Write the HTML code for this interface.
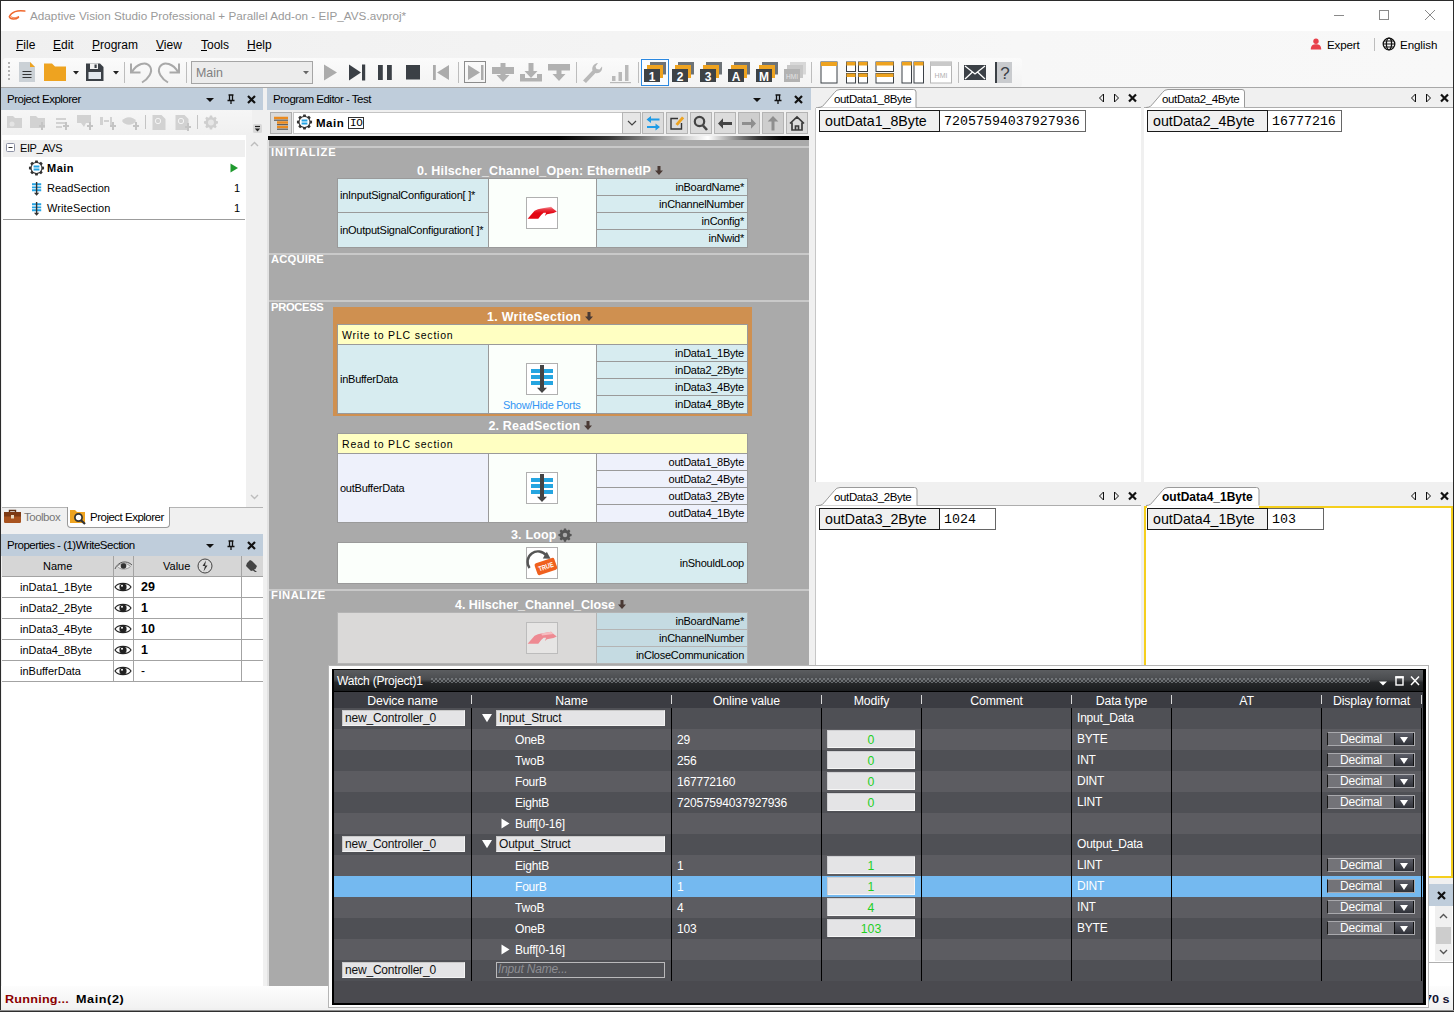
<!DOCTYPE html>
<html><head><meta charset="utf-8">
<style>
*{box-sizing:border-box;margin:0;padding:0}
html,body{width:1454px;height:1012px;overflow:hidden;background:#fff}
body{font-family:"Liberation Sans",sans-serif;font-size:12px;color:#000;position:relative}
.a{position:absolute}
.t{position:absolute;white-space:nowrap;line-height:14px}
.hdr{position:absolute;background:#bfcddb;height:22px}
.hdr .t{top:4px;font-size:11.5px;letter-spacing:-0.5px}
svg{position:absolute;overflow:visible}
.mono{font-family:"Liberation Mono",monospace}
.b{font-weight:bold}
.tah{font-size:11px;letter-spacing:0}
.tah.b{letter-spacing:0.5px}
.sec{font-weight:bold;font-size:10px;color:#fff;transform:scaleX(1.12);transform-origin:0 0}
.bt{font-weight:bold;font-size:12.5px;color:#fff}
.blk{background:#9a9a9a}
.pl,.pr{background:#d7ecf0}
.pc{background:#fbfffb}
.pt{font-size:11px;letter-spacing:-0.25px}
.r{text-align:right}
.vt{font-size:10.5px;letter-spacing:0.8px}
.ib{width:32px;height:32px;background:#fff;border:1px solid #b0b0b0}
.tb{font-size:11.5px;letter-spacing:-0.37px}
.tb.b{font-size:12px;letter-spacing:0}
.lb{height:22px;background:#f0f0f0;border:1px solid #1a1a1a}
.vb{height:22px;background:#fff;border:1px solid #666;border-left:0}
.lt{font-size:14.200px;line-height:17px}
.mv{font-size:13.300px;line-height:17px}
.wt{color:#fff;font-size:12px;letter-spacing:-0.2px}
.wh{top:694px;text-align:center;font-size:12.3px;letter-spacing:-0.1px}
.cs{top:708px;width:1px;height:273px;background:#000}
.ct{top:695px;width:1px;height:9px;background:#d8d8d8}
.wb{height:16px;background:#e4e4e6;border:1px solid #f4f4f4;border-top-color:#c8c8c8;border-left-color:#c8c8c8}
.wbt{font-size:12px;color:#111;letter-spacing:-0.2px}
.mb{left:827px;width:88px;height:18px;background:#e4e4e6;box-shadow:inset 1px 1px 0 #cfcfd2,inset -1px -1px 0 #f6f6f6}
.mt{left:827px;width:88px;text-align:center;color:#1fcf1f;font-size:12.3px}
.dc{left:1327px;width:88px;height:14px;background:#737378;border:1px solid #a9a9ad;border-left-color:#141414}
.dc b{position:absolute;left:0;top:-1px;width:66px;text-align:center;color:#fff;font-weight:normal;font-size:12px;letter-spacing:-0.2px;line-height:14px}
.dc i{position:absolute;left:66px;top:0;width:20px;height:12px;background:linear-gradient(#5c5e68,#2f3138);border-left:1px solid #111;border-right:1px solid #111}
.dc i:after{content:"";position:absolute;left:5px;top:3.500px;border:4.200px solid transparent;border-top:6px solid #fff;border-bottom:0}
.st{font-weight:bold;font-size:10.500px;letter-spacing:0.2px;transform:scaleX(1.2);transform-origin:0 0}
</style></head><body>
<!-- window frame -->
<div class="a" style="left:0;top:0;width:1454px;height:1012px;border:1px solid #2b2b2b;border-bottom-color:#444"></div>
<!-- title bar -->
<div class="a" id="titlebar" style="left:1px;top:1px;width:1452px;height:30px;background:#fff"></div>
<!-- menu bar -->
<div class="a" id="menubar" style="left:1px;top:31px;width:1452px;height:27px;background:linear-gradient(90deg,#f0f0f0 0,#f1f1f1 15%,#f7f7f7 70%,#f8f8f8 100%)"></div>
<!-- toolbar row -->
<div class="a" id="toolrow" style="left:1px;top:58px;width:1452px;height:30px;background:linear-gradient(90deg,#f0f0f0 0,#f1f1f1 15%,#f7f7f7 70%,#f8f8f8 100%)"></div>
<!-- main area bg -->
<div class="a" id="mainbg" style="left:1px;top:88px;width:1452px;height:898px;background:#f0f0f0"></div>
<!-- status bar -->
<div class="a" id="status" style="left:1px;top:986px;width:1452px;height:25px;background:#f0f0f0"></div>
<!-- TITLE -->
<svg style="left:8px;top:9px" width="18" height="12" viewBox="0 0 18 12"><path d="M16.8 2.100C9.500 0.800 3.200 2.800 1.300 7.800C2.500 10.800 7.500 10.800 10.500 8.300" fill="none" stroke="#f0672c" stroke-width="1.500" stroke-linecap="round"/><path d="M3 7.500C4.500 9.300 8 9 10.500 7.600" fill="none" stroke="#f0672c" stroke-width="1" stroke-linecap="round"/></svg>
<div class="t" id="ttl" style="left:30px;top:9px;font-size:11.7px;color:#9a9a9a;letter-spacing:0.02px">Adaptive Vision Studio Professional + Parallel Add-on - EIP_AVS.avproj*</div>
<svg style="left:1334px;top:9px" width="110" height="14" viewBox="0 0 110 14" fill="none" stroke="#8a8a8a" stroke-width="1"><path d="M0 6.500H10"/><rect x="45.500" y="1.500" width="9" height="9"/><path d="M91 1l10 10M101 1L91 11"/></svg>
<!-- MENU -->
<div class="t" style="left:16px;top:38px;font-size:12px"><u>F</u>ile</div>
<div class="t" style="left:53px;top:38px;font-size:12px"><u>E</u>dit</div>
<div class="t" style="left:92px;top:38px;font-size:12px"><u>P</u>rogram</div>
<div class="t" style="left:156px;top:38px;font-size:12px"><u>V</u>iew</div>
<div class="t" style="left:201px;top:38px;font-size:12px"><u>T</u>ools</div>
<div class="t" style="left:247px;top:38px;font-size:12px"><u>H</u>elp</div>
<svg style="left:1310px;top:38px" width="12" height="12" viewBox="0 0 12 12"><circle cx="6" cy="3.2" r="2.7" fill="#e8414b"/><path d="M0.8 11.500C0.8 7.5 3 6.300 6 6.300S11.200 7.500 11.200 11.500Z" fill="#e8414b"/></svg>
<div class="t" style="left:1327px;top:38px;font-size:11.6px;letter-spacing:-0.15px">Expert</div>
<div class="a" style="left:1374px;top:38px;width:1px;height:13px;background:#bdbdbd"></div>
<svg style="left:1382px;top:37px" width="14" height="14" viewBox="0 0 14 14" fill="none" stroke="#111" stroke-width="1.3"><circle cx="7" cy="7" r="5.800"/><ellipse cx="7" cy="7" rx="2.600" ry="5.800"/><path d="M1.2 7H12.800M2 4H12M2 10H12" stroke-width="1"/></svg>
<div class="t" style="left:1400px;top:38px;font-size:11.6px;letter-spacing:-0.1px">English</div>
<!-- TOOLBAR -->
<div class="a" style="left:1px;top:87px;width:1452px;height:1px;background:#a8a8a8"></div>
<div class="a" style="left:3px;top:58px;width:1019px;height:29px;background:linear-gradient(#fbfbfb,#f3f3f3);border-radius:3px"></div>
<div class="a" style="left:8px;top:62px;width:2px;height:19px;background:repeating-linear-gradient(#b4b4b4 0 2px,transparent 2px 4px)"></div>
<svg style="left:0;top:58px" width="1030" height="30" viewBox="0 58 1030 30">
 <!-- new -->
 <path d="M19 62h11l5 5v15H19z" fill="#cbd1d6"/><path d="M30 62l5 5h-5z" fill="#eea320"/><path d="M22.500 71.500h9M22.500 74.500h9M22.500 77.500h9" stroke="#333" stroke-width="1.2"/>
 <!-- folder -->
 <path d="M44 63.500h8l3 3h11V81H44z" fill="#eea320"/>
 <path d="M73 71h6l-3 3.500z" fill="#222"/>
 <!-- save -->
 <path d="M86 63.500h14l3.500 3.500V81H86z" fill="#3b4046"/><rect x="90" y="63.500" width="8" height="5.500" fill="#f3f3f3"/><rect x="94.500" y="64.500" width="2.200" height="3.500" fill="#3b4046"/><rect x="88.500" y="72" width="12.500" height="7" fill="#e3e8ee"/>
 <path d="M113 71h6l-3 3.500z" fill="#222"/>
 <path d="M124.500 62v21M186.500 62v21M458.500 62v21M576.500 62v21M638.500 62v21M811.500 62v21M958.500 62v21" stroke="#bdbdbd" stroke-width="1"/>
 <!-- undo redo -->
 <g fill="none" stroke="#a9a9a9" stroke-width="2"><path d="M131 63.500V72.500H140.500"/><path d="M132 72C136.500 64 146 60.500 150 66.500C153.500 72 148 79 142 82.500"/><path d="M179 63.500V72.500H169.500"/><path d="M178 72C173.500 64 164 60.500 160 66.500C156.500 72 162 79 168 82.500"/></g>
 <!-- combo -->
 <rect x="191.500" y="61.500" width="121" height="22" fill="#ececec" stroke="#a5a5a5"/><path d="M303 71h6l-3 3.200z" fill="#666"/>
 <!-- play controls -->
 <path d="M324 64.500v16l13-8z" fill="#ababab"/>
 <path d="M349 64.500v16l12-8z" fill="#3b4046"/><rect x="362" y="64.500" width="3.200" height="16" fill="#3b4046"/>
 <rect x="378" y="65" width="4.800" height="15" fill="#3b4046"/><rect x="387" y="65" width="4.800" height="15" fill="#3b4046"/>
 <rect x="406" y="65" width="14" height="14.500" fill="#3b4046"/>
 <rect x="433" y="65" width="2.800" height="15" fill="#ababab"/><path d="M449 65v15l-12-7.500z" fill="#ababab"/>
 <rect x="464.500" y="61.500" width="21" height="21" fill="none" stroke="#8c8c8c"/><path d="M468 65v15l12-7.500z" fill="#ababab"/><rect x="481" y="65" width="2.500" height="15" fill="#ababab"/>
 <!-- step icons -->
 <g fill="#b1b1b1"><rect x="492" y="67" width="22" height="7"/><path d="M500.500 63h5v12h4l-6.500 7-6.500-7h4z"/></g>
 <g fill="#b1b1b1"><path d="M528.500 63h5v8h4l-6.500 7-6.500-7h4z"/><path d="M520 74l5 0 0 4h12v-4h5v7.500h-22z"/></g>
 <g fill="#b1b1b1"><rect x="548" y="64" width="22" height="6.500"/><path d="M556.500 68h5v6h4l-6.500 7-6.500-7h4z"/></g>
 <!-- wrench -->
 <path d="M583 80.500l9.500-10c-1-3 1-7 5.500-7.500l-2.500 3.500 1 2.500 3 .5 2.500-3c1 4-2.500 7.500-6.500 6.500l-9.500 10z" fill="#b9b9b9"/>
 <!-- chart -->
 <g fill="#b9b9b9"><rect x="612" y="76" width="3.500" height="5"/><rect x="618.500" y="72" width="3.500" height="9"/><rect x="625" y="65" width="3.500" height="16"/><rect x="610" y="82" width="21" height="1.200"/></g>
 <!-- view 1 selected -->
 <rect x="641.500" y="59.500" width="27" height="26" fill="#f9fcff" stroke="#2b88e0"/>
 <g id="stk"><path d="M650 62h16v12.500h-16z" fill="#6d7378"/><path d="M647 65h16v13h-16z" fill="#eea320"/><path d="M644 69h16v13h-16z" fill="#3d4246"/></g>
 <use href="#stk" x="28"/><use href="#stk" x="56"/><use href="#stk" x="84"/><use href="#stk" x="112"/>
 <g><path d="M790 62h16v12.500h-16z" fill="#d8d8d8"/><path d="M787 65h16v13h-16z" fill="#c8c8c8"/><path d="M784 69h16v13h-16z" fill="#b2b2b2"/></g>
 <g fill="#fff" font-family="Liberation Sans" font-weight="bold" font-size="12" text-anchor="middle"><text x="652" y="80.500">1</text><text x="680" y="80.500">2</text><text x="708" y="80.500">3</text><text x="736" y="80.500">A</text><text x="764" y="80.500">M</text><text x="792" y="79" font-size="6.500" font-weight="normal" fill="#e4e4e4">HMI</text></g>
 <!-- layout icons -->
 <g fill="#fff" stroke="#3b4046" stroke-width="1">
  <rect x="821" y="62" width="16" height="21"/>
  <rect x="846.500" y="62" width="9" height="9.500"/><rect x="858.500" y="62" width="9" height="9.500"/><rect x="846.500" y="73.500" width="9" height="9.500"/><rect x="858.500" y="73.500" width="9" height="9.500"/>
  <rect x="876" y="62" width="17.500" height="9.500"/><rect x="876" y="73.500" width="17.500" height="9.500"/>
  <rect x="902" y="62" width="9.500" height="21"/><rect x="914" y="62" width="9.500" height="21"/>
 </g>
 <g fill="#eea320"><rect x="821" y="62" width="16" height="4"/><rect x="846.500" y="62" width="9" height="3.500"/><rect x="858.500" y="62" width="9" height="3.500"/><rect x="846.500" y="73.500" width="9" height="3.500"/><rect x="858.500" y="73.500" width="9" height="3.500"/><rect x="876" y="62" width="17.500" height="3.500"/><rect x="876" y="73.500" width="17.500" height="3.500"/><rect x="902" y="62" width="9.500" height="3.500"/><rect x="914" y="62" width="9.500" height="3.500"/></g>
 <rect x="930.500" y="62" width="21" height="21" fill="#fff" stroke="#b4b4b4"/><rect x="930.500" y="62" width="21" height="4" fill="#c9c9c9"/><text x="941" y="78" font-family="Liberation Sans" font-size="7" fill="#b0b0b0" text-anchor="middle">HMI</text>
 <!-- mail -->
 <rect x="964" y="65" width="22" height="15" fill="#3b4046"/><path d="M965 66l10 8 10-8M965 79l7.500-7M985 79l-7.500-7" fill="none" stroke="#fff" stroke-width="1.300"/>
 <!-- help -->
 <rect x="995" y="62" width="17" height="21" fill="#c9cbce"/><rect x="995" y="62" width="2" height="21" fill="#3b4046"/><text x="1005" y="79" font-family="Liberation Sans" font-size="17" fill="#3b4046" text-anchor="middle">?</text>
</svg>
<div class="t" style="left:196px;top:66px;font-size:12.4px;color:#808080">Main</div>

<!-- shared defs -->
<svg width="0" height="0" style="left:0;top:0"><defs>
 <g id="hdricons"><path d="M0 10h8l-4 4z" fill="#111"/><path d="M22.500 7h5M23.500 7v5.500M26.500 7v5.500M21.500 12.500h7M25 12.500v3.500" stroke="#111" stroke-width="1.300" fill="none"/><path d="M42 8l7 7M49 8l-7 7" stroke="#111" stroke-width="2.200" fill="none"/></g>
 <g id="gear"><path d="M6.300 0.500h2.400l.4 1.800 1.300.55 1.600-1 1.700 1.700-1 1.600.55 1.300 1.800.4v2.400l-1.800.4-.55 1.300 1 1.600-1.700 1.700-1.600-1-1.300.55-.4 1.800H6.300l-.4-1.800-1.300-.55-1.600 1-1.700-1.700 1-1.600-.55-1.300-1.800-.4V6.850l1.800-.4.55-1.300-1-1.600 1.700-1.700 1.600 1 1.300-.55z" fill="#333"/><circle cx="7.500" cy="8" r="4.900" fill="#fff"/><path d="M4.600 6.500h5.800M4.600 9.600h5.800" stroke="#27a4e4" stroke-width="2"/></g>
 <g id="secico"><path d="M0 2.300h9.200M0 5.400h9.200M0 8.300h9.200" stroke="#27a4e4" stroke-width="1.900"/><path d="M4.600 0v11.500" stroke="#333" stroke-width="1.400"/><path d="M2 10.800h5.200l-2.600 2.900z" fill="#333"/></g>
 <g id="eye"><path d="M0 4.500C3 -0.300 13 -0.300 16 4.500C13 9.300 3 9.300 0 4.500Z" fill="#fff" stroke="#222" stroke-width="1.200"/><circle cx="8" cy="4.500" r="3.600" fill="#222"/><circle cx="7" cy="3.300" r="1" fill="#fff"/></g>
 <g id="navic"><path d="M4.500 0.500v8l-4-4z" fill="none" stroke="#111" stroke-width="1"/><path d="M15.500 0.500v8l4-4z" fill="none" stroke="#111" stroke-width="1"/><path d="M30 1l7 7M37 1l-7 7" stroke="#111" stroke-width="2.200" fill="none"/></g>
</defs></svg>
<!-- PROJECT EXPLORER -->
<div class="hdr" style="left:1px;top:88px;width:262px"><div class="t" id="pe_h" style="left:6px">Project Explorer</div></div>
<svg style="left:206px;top:88px" width="52" height="22"><use href="#hdricons"/></svg>
<div class="a" style="left:2px;top:110px;width:250px;height:25px;background:linear-gradient(#f6f6f6,#f0f0f0)"></div>
<svg style="left:0;top:110px" width="264" height="26" viewBox="0 110 264 26">
 <g fill="#d2d2d2" stroke="none">
  <path d="M7 116h6l2 2h7v10H7z"/><path d="M30 116h6l2 2h7v10H30z"/>
  <path d="M56 118h10v2H56zM56 122h10v2H56zM56 126h6v2H56z"/>
  <path d="M77 115h14v8H77zM81 123l3 4 2-4z"/>
  <path d="M100 117h3v8h-3zM104 120h5v2h-5zM110 117h2v8h-2z"/>
  <path d="M122 121c3-5 11-5 14 0-3 5-11 5-14 0z"/>
  <path d="M152.500 115h9l4 4v11h-13z"/><path d="M175.500 115h9l4 4v11h-13z"/>
 </g>
 <g fill="#c4c4c4"><path d="M17 124h2v-3h2v3h2v2h-2v3h-2v-3h-2z" transform="translate(22 1)"/><path d="M17 124h2v-3h2v3h2v2h-2v3h-2v-3h-2z" transform="translate(46 1)"/><path d="M17 124h2v-3h2v3h2v2h-2v3h-2v-3h-2z" transform="translate(70 1)"/><path d="M17 124h2v-3h2v3h2v2h-2v3h-2v-3h-2z" transform="translate(93 1)"/><path d="M17 124h2v-3h2v3h2v2h-2v3h-2v-3h-2z" transform="translate(116 1)"/><path d="M17 124h2v-3h2v3h2v2h-2v3h-2v-3h-2z" transform="translate(168 2)"/></g>
 <circle cx="12" cy="124" r="2.500" fill="#e4e4e4"/><circle cx="158" cy="121" r="2.700" fill="none" stroke="#f4f4f4"/><circle cx="181" cy="121" r="2.700" fill="none" stroke="#f4f4f4"/>
 <path d="M145.500 115v14M197.500 115v14" stroke="#c4c4c4"/>
 <g transform="translate(204 115) scale(0.93)"><path d="M6.300 0.500h2.400l.4 1.800 1.300.55 1.600-1 1.700 1.700-1 1.600.55 1.300 1.800.4v2.400l-1.800.4-.55 1.300 1 1.600-1.700 1.700-1.600-1-1.300.55-.4 1.800H6.300l-.4-1.800-1.300-.55-1.600 1-1.700-1.700 1-1.600-.55-1.300-1.800-.4V6.850l1.800-.4.55-1.300-1-1.600 1.700-1.700 1.600 1 1.300-.55z" fill="#cfcfcf"/><circle cx="7.500" cy="8" r="3.200" fill="#e6e6e6"/></g>
 <rect x="253" y="124" width="9" height="9" rx="1.500" fill="#d9d9d9"/><path d="M255 126.500h5" stroke="#222" stroke-width="1.200"/><path d="M254.800 128.500h5.400l-2.700 3z" fill="#222"/>
</svg>
<div class="a" style="left:2px;top:135px;width:244px;height:372px;background:#fff"></div>
<div class="a" style="left:246px;top:135px;width:17px;height:370px;background:#f0f0f0"></div>
<svg style="left:250px;top:141px" width="9" height="6" viewBox="0 0 9 6"><path d="M1 5l3.500-3.500L8 5" fill="none" stroke="#bdbdbd" stroke-width="1.400"/></svg>
<svg style="left:250px;top:494px" width="9" height="6" viewBox="0 0 9 6"><path d="M1 1l3.500 3.500L8 1" fill="none" stroke="#bdbdbd" stroke-width="1.400"/></svg>
<div class="a" style="left:3px;top:140px;width:242px;height:17px;background:#efefef"></div>
<svg style="left:6px;top:143px" width="10" height="10"><rect x=".5" y=".5" width="8" height="8" fill="#fff" stroke="#8a8fa3" rx="1"/><path d="M2.500 4.500h4" stroke="#333"/></svg>
<div class="t tah" style="left:20px;top:141px;letter-spacing:-0.4px">EIP_AVS</div>
<svg style="left:29px;top:160px" width="16" height="17"><use href="#gear"/></svg>
<div class="t tah b" id="pe_main" style="left:47px;top:161px">Main</div>
<svg style="left:230px;top:163px" width="9" height="10"><path d="M.5 .5v9l7.500-4.500z" fill="#1f9a2e"/></svg>
<svg style="left:32px;top:182px" width="10" height="14"><use href="#secico"/></svg>
<div class="t tah" style="left:47px;top:181px">ReadSection</div>
<div class="t tah" style="left:234px;top:181px">1</div>
<svg style="left:32px;top:202px" width="10" height="14"><use href="#secico"/></svg>
<div class="t tah" style="left:47px;top:201px;letter-spacing:0.1px">WriteSection</div>
<div class="t tah" style="left:234px;top:201px">1</div>
<div class="a" style="left:3px;top:219px;width:242px;height:1px;background:#9c9c9c"></div>
<!-- tabs -->
<div class="a" style="left:2px;top:507px;width:261px;height:1px;background:#b4b4b4"></div>
<div class="a" style="left:67px;top:507px;width:103px;height:21px;background:#fff;border:1px solid #9a9a9a;border-top:0;border-radius:0 0 4px 4px"></div>
<svg style="left:4px;top:509px" width="17" height="15" viewBox="0 0 17 15"><path d="M5.500 3V1.500h6V3" fill="none" stroke="#5a2d12" stroke-width="1.400"/><rect x="0" y="3" width="17" height="11" rx="1.200" fill="#a8531f"/><rect x="0" y="3" width="17" height="4.500" fill="#7d3a14"/><rect x="7" y="6" width="3" height="3.500" fill="#e8d9c0"/></svg>
<div class="t" id="tb_t" style="left:24px;top:510px;color:#777;font-size:11.5px;letter-spacing:-0.5px">Toolbox</div>
<svg style="left:70px;top:509px" width="17" height="16" viewBox="0 0 17 16"><path d="M0 1h5l2 2h8v11H0z" fill="#eea320"/><circle cx="8.500" cy="8.500" r="3.600" fill="#fff" stroke="#333" stroke-width="1.700"/><path d="M11 11.200l4 3.800" stroke="#333" stroke-width="2.200"/></svg>
<div class="t" id="pe_t" style="left:90px;top:510px;font-size:11.5px;letter-spacing:-0.5px">Project Explorer</div>
<!-- PROPERTIES -->
<div class="hdr" style="left:1px;top:534px;width:262px"><div class="t" id="pr_h" style="left:6px">Properties - (1)WriteSection</div></div>
<svg style="left:206px;top:534px" width="52" height="22"><use href="#hdricons"/></svg>
<div class="a" style="left:2px;top:556px;width:261px;height:126px;background:#fff"></div>
<div class="a" style="left:2px;top:556px;width:261px;height:20px;background:#d6d6d6"></div>
<div class="a" style="left:2px;top:576px;width:261px;height:106px;background:repeating-linear-gradient(#a3a3a3 0 1px,transparent 1px 21px)"></div>
<div class="a" style="left:113px;top:556px;width:1px;height:125px;background:#a3a3a3"></div>
<div class="a" style="left:133px;top:556px;width:1px;height:125px;background:#a3a3a3"></div>
<div class="a" style="left:241px;top:556px;width:1px;height:125px;background:#a3a3a3"></div>
<div class="t tah" style="left:43px;top:559px">Name</div>
<div class="t tah" style="left:163px;top:559px">Value</div>
<svg style="left:114px;top:558px" width="19" height="16" viewBox="0 0 19 16"><path d="M1 11C4 3 13 2 18 7" fill="none" stroke="#555" stroke-width="1"/><path d="M3.500 8.500C6 4.500 13 4.500 16.500 8.500C13 12 6 12 3.500 8.500Z" fill="#e8e8e8" stroke="#888" stroke-width=".8"/><circle cx="9.500" cy="8" r="2.800" fill="#333"/></svg>
<svg style="left:197px;top:558px" width="16" height="16" viewBox="0 0 16 16"><circle cx="8" cy="8" r="7" fill="#dcdcdc" stroke="#444" stroke-width="1"/><path d="M9 2.500L5.500 8h2.500l-1.500 5.500L10.500 7.500H8z" fill="#333"/></svg>
<svg style="left:246px;top:559px" width="13" height="13" viewBox="0 0 13 13"><path d="M1 4l3-3 2 1 5 5-1.500 3-1.500.5 3 2.500h-2l-2-1.500-2 .5-5-5z" fill="#444"/></svg>
<div class="t tah" style="left:20px;top:580px">inData1_1Byte</div>
<div class="t tah" style="left:20px;top:601px">inData2_2Byte</div>
<div class="t tah" style="left:20px;top:622px">inData3_4Byte</div>
<div class="t tah" style="left:20px;top:643px">inData4_8Byte</div>
<div class="t tah" style="left:20px;top:664px">inBufferData</div>
<svg style="left:115px;top:582px" width="17" height="10"><use href="#eye" y=".5"/></svg>
<svg style="left:115px;top:603px" width="17" height="10"><use href="#eye" y=".5"/></svg>
<svg style="left:115px;top:624px" width="17" height="10"><use href="#eye" y=".5"/></svg>
<svg style="left:115px;top:645px" width="17" height="10"><use href="#eye" y=".5"/></svg>
<svg style="left:115px;top:666px" width="17" height="10"><use href="#eye" y=".5"/></svg>
<div class="t b" style="left:141px;top:580px;font-size:12.500px">29</div>
<div class="t b" style="left:141px;top:601px;font-size:12.500px">1</div>
<div class="t b" style="left:141px;top:622px;font-size:12.500px">10</div>
<div class="t b" style="left:141px;top:643px;font-size:12.500px">1</div>
<div class="t" style="left:141px;top:664px;font-size:12px">-</div>
<div class="a" style="left:2px;top:682px;width:261px;height:304px;background:#fff"></div>

<!-- PROGRAM EDITOR -->
<div class="hdr" style="left:267px;top:88px;width:544px"><div class="t" id="ed_h" style="left:6px">Program Editor - Test</div></div>
<svg style="left:753px;top:88px" width="52" height="22"><use href="#hdricons"/></svg>
<div class="a" style="left:267px;top:110px;width:542px;height:26px;background:#f0f0f0"></div>
<div class="a" style="left:270px;top:112px;width:22px;height:22px;background:#dadada;border:1px solid #adadad"></div>
<svg style="left:273px;top:116px" width="16" height="14" viewBox="0 0 16 14"><path d="M1 2h14M4 6.500h11M4 11h11" stroke="#eb8a1e" stroke-width="2.600"/><path d="M1 4.200h14M4 8.700h11M4 13.200h11" stroke="#333" stroke-width=".9"/></svg>
<div class="a" style="left:293px;top:112px;width:348px;height:22px;background:#fff;border:1px solid #c4c4c4"></div>
<svg style="left:297px;top:114px" width="16" height="17"><use href="#gear"/></svg>
<div class="t tah b" id="ed_main" style="left:316px;top:116px;font-size:11.5px">Main</div>
<div class="a" style="left:348px;top:117px;width:16px;height:12px;border:1px solid #333;background:#fff"></div>
<div class="t mono" style="left:350px;top:116px;font-size:11px;line-height:14px;letter-spacing:-0.3px">IO</div>
<div class="a" style="left:622px;top:112px;width:19px;height:22px;background:#e6e6e6;border:1px solid #b4b4b4"></div>
<svg style="left:627px;top:120px" width="10" height="7" viewBox="0 0 10 7"><path d="M1 1l4 4 4-4" fill="none" stroke="#444" stroke-width="1.200"/></svg>
<svg style="left:642px;top:112px" width="168" height="22" viewBox="642 112 168 22">
 <g fill="#dcdcdc" stroke="#b4b4b4"><rect x="642.500" y="112.500" width="21" height="21"/><rect x="666.500" y="112.500" width="21" height="21"/><rect x="690.500" y="112.500" width="21" height="21"/><rect x="714.500" y="112.500" width="21" height="21"/><rect x="738.500" y="112.500" width="21" height="21" fill="#cecece"/><rect x="762.500" y="112.500" width="21" height="21" fill="#cecece"/><rect x="786.500" y="112.500" width="21" height="21"/></g>
 <g fill="none" stroke="#1f9be6" stroke-width="2"><path d="M648 119.500h11.500"/><path d="M658.500 127h-11.500"/></g><path d="M651 116l-4.500 3.500 4.500 3.500zM655.500 123.500l4.500 3.500-4.500 3.500z" fill="#1f9be6"/>
 <path d="M678 118.500h-7v10.500h10.500v-6" fill="none" stroke="#333" stroke-width="1.400"/><path d="M675.500 124l6.500-7.500 2.200 1.800-6.500 7.500z" fill="#eea320"/>
 <circle cx="699.500" cy="121.500" r="4.700" fill="#d2d2d2" stroke="#444" stroke-width="2.200"/><path d="M703 125.500l4 4.500" stroke="#444" stroke-width="2.600"/>
 <path d="M732 122h-9v-3.800l-5 5.300 5 5.300v-3.800h9z" fill="#444"/>
 <path d="M742 122h9v-3.800l5 5.300-5 5.300v-3.800h-9z" fill="#8e8e8e"/>
 <path d="M771.500 130.500v-9h-3.800l5.300-5.500 5.300 5.500h-3.800v9z" fill="#8e8e8e"/>
 <path d="M790 123.500l7-6.500 7 6.500M792 122.500v7.500h10v-7.500M795.500 130v-4h3V130" fill="none" stroke="#3a3a3a" stroke-width="1.700"/>
</svg>
<!-- marquee bar -->
<div class="a" style="left:268px;top:136px;width:541px;height:4px;background:linear-gradient(90deg,#000 0,#000 290px,#333 340px,#fff 440px,#333 490px,#000 515px,#000 100%)"></div>
<!-- canvas -->
<div class="a" id="canvas" style="left:267px;top:140px;width:542px;height:846px;background:#aaa;border-left:2px solid #e2e2e2;overflow:hidden"></div>
<div class="a" style="left:269px;top:146px;width:540px;height:2px;background:#c9c9c9"></div>
<div class="a" style="left:269px;top:253px;width:540px;height:2px;background:#c9c9c9"></div>
<div class="a" style="left:269px;top:300px;width:540px;height:2px;background:#c9c9c9"></div>
<div class="a" style="left:269px;top:589px;width:540px;height:2px;background:#c9c9c9"></div>
<div class="t sec" style="left:271px;top:146px;letter-spacing:0.8px">INITIALIZE</div>
<div class="t sec" style="left:271px;top:253px;letter-spacing:0.17px">ACQUIRE</div>
<div class="t sec" style="left:271px;top:301px;letter-spacing:-0.3px">PROCESS</div>
<div class="t sec" style="left:271px;top:589px;letter-spacing:0.5px">FINALIZE</div>
<!-- block 0 -->
<div class="t bt" id="b0t" style="left:417px;top:164px;letter-spacing:0.15px">0. Hilscher_Channel_Open: EthernetIP</div>
<svg class="dar" style="left:655px;top:166px" width="8" height="9" viewBox="0 0 8 9"><path d="M2.500 0h3v4.500H8L4 9 0 4.500h2.500z" fill="#4a3a35"/></svg>
<div class="a blk" style="left:337px;top:178px;width:411px;height:70px"></div>
<div class="a pl" style="left:338px;top:179px;width:150px;height:33px"></div>
<div class="a pl" style="left:338px;top:213px;width:150px;height:34px"></div>
<div class="a pc" style="left:489px;top:179px;width:107px;height:68px"></div>
<div class="a pr" style="left:597px;top:179px;width:150px;height:16px"></div>
<div class="a pr" style="left:597px;top:196px;width:150px;height:16px"></div>
<div class="a pr" style="left:597px;top:213px;width:150px;height:16px"></div>
<div class="a pr" style="left:597px;top:230px;width:150px;height:17px"></div>
<div class="t pt" style="left:340px;top:188px">inInputSignalConfiguration[ ]*</div>
<div class="t pt" style="left:340px;top:223px">inOutputSignalConfiguration[ ]*</div>
<div class="t pt r" style="right:710px;top:180px">inBoardName*</div>
<div class="t pt r" style="right:710px;top:197px">inChannelNumber</div>
<div class="t pt r" style="right:710px;top:214px">inConfig*</div>
<div class="t pt r" style="right:710px;top:231px">inNwid*</div>
<div class="a ib" style="left:526px;top:197px"></div>
<svg style="left:526px;top:197px" width="32" height="32" viewBox="0 0 32 32"><defs><linearGradient id="hg" x1="0" y1="9.500" x2="0" y2="16" gradientUnits="userSpaceOnUse"><stop offset="0" stop-color="#f7a3a9"/><stop offset=".45" stop-color="#ea3a46"/><stop offset="1" stop-color="#e30613"/></linearGradient></defs><path d="M1.600 21.800L8.600 13.700Q12 11.900 15.200 11.600L25.100 9.800L27.500 11.900L30.800 14.400L27.500 16L20.900 17.300L18.900 19L20.100 15.700L17.600 15.700Q14.500 18 12.300 21.800Z" fill="url(#hg)"/></svg>
<!-- block 1 -->
<div class="a" style="left:333px;top:307px;width:419px;height:109px;background:#cf9050"></div>
<div class="t bt" id="b1t" style="left:487px;top:310px;letter-spacing:0.28px">1. WriteSection</div>
<svg style="left:585px;top:312px" width="8" height="9" viewBox="0 0 8 9"><path d="M2.500 0h3v4.500H8L4 9 0 4.500h2.500z" fill="#4a3a35"/></svg>
<div class="a blk" style="left:337px;top:324px;width:411px;height:90px"></div>
<div class="a" style="left:338px;top:325px;width:409px;height:19px;background:#ffffc2"></div>
<div class="t vt" style="left:342px;top:328px">Write to PLC section</div>
<div class="a pl" style="left:338px;top:345px;width:150px;height:68px"></div>
<div class="a pc" style="left:489px;top:345px;width:107px;height:68px"></div>
<div class="a pr" style="left:597px;top:345px;width:150px;height:16px"></div>
<div class="a pr" style="left:597px;top:362px;width:150px;height:16px"></div>
<div class="a pr" style="left:597px;top:379px;width:150px;height:16px"></div>
<div class="a pr" style="left:597px;top:396px;width:150px;height:17px"></div>
<div class="t pt" style="left:340px;top:372px">inBufferData</div>
<div class="t pt r" style="right:710px;top:346px">inData1_1Byte</div>
<div class="t pt r" style="right:710px;top:363px">inData2_2Byte</div>
<div class="t pt r" style="right:710px;top:380px">inData3_4Byte</div>
<div class="t pt r" style="right:710px;top:397px">inData4_8Byte</div>
<div class="a ib" style="left:526px;top:363px"></div>
<svg style="left:526px;top:363px" width="32" height="32" viewBox="0 0 32 32"><path d="M5 8h22M5 14h22M5 20h22" stroke="#25a5e0" stroke-width="4"/><path d="M16 2v24" stroke="#444" stroke-width="4"/><path d="M11 24.800h10l-5 5.200z" fill="#444"/></svg>
<div class="t" id="shp" style="left:503px;top:398px;font-size:11px;color:#3396f5;letter-spacing:-0.3px">Show/Hide Ports</div>
<!-- block 2 -->
<div class="t bt" id="b2t" style="left:488.5px;top:419px;letter-spacing:0.15px">2. ReadSection</div>
<svg style="left:584px;top:421px" width="8" height="9" viewBox="0 0 8 9"><path d="M2.500 0h3v4.500H8L4 9 0 4.500h2.500z" fill="#4a3a35"/></svg>
<div class="a blk" style="left:337px;top:433px;width:411px;height:90px"></div>
<div class="a" style="left:338px;top:434px;width:409px;height:19px;background:#ffffc2"></div>
<div class="t vt" style="left:342px;top:437px">Read to PLC section</div>
<div class="a pl" style="left:338px;top:454px;width:150px;height:68px;background:#eef1fb"></div>
<div class="a pc" style="left:489px;top:454px;width:107px;height:68px"></div>
<div class="a pr" style="left:597px;top:454px;width:150px;height:16px;background:#eef1fb"></div>
<div class="a pr" style="left:597px;top:471px;width:150px;height:16px;background:#eef1fb"></div>
<div class="a pr" style="left:597px;top:488px;width:150px;height:16px;background:#eef1fb"></div>
<div class="a pr" style="left:597px;top:505px;width:150px;height:17px;background:#eef1fb"></div>
<div class="t pt" style="left:340px;top:481px">outBufferData</div>
<div class="t pt r" style="right:710px;top:455px">outData1_8Byte</div>
<div class="t pt r" style="right:710px;top:472px">outData2_4Byte</div>
<div class="t pt r" style="right:710px;top:489px">outData3_2Byte</div>
<div class="t pt r" style="right:710px;top:506px">outData4_1Byte</div>
<div class="a ib" style="left:526px;top:472px"></div>
<svg style="left:526px;top:472px" width="32" height="32" viewBox="0 0 32 32"><path d="M5 8h22M5 14h22M5 20h22" stroke="#25a5e0" stroke-width="4"/><path d="M16 2v24" stroke="#444" stroke-width="4"/><path d="M11 24.800h10l-5 5.200z" fill="#444"/></svg>
<!-- block 3 -->
<div class="t bt" id="b3t" style="left:511px;top:528px;letter-spacing:0.17px">3. Loop</div>
<svg style="left:558px;top:528px" width="14" height="14" viewBox="0 0 15 16"><path d="M6.300 0.500h2.400l.4 1.800 1.300.55 1.600-1 1.700 1.700-1 1.600.55 1.300 1.800.4v2.400l-1.800.4-.55 1.300 1 1.600-1.700 1.700-1.600-1-1.300.55-.4 1.800H6.300l-.4-1.800-1.300-.55-1.600 1-1.700-1.700 1-1.600-.55-1.300-1.800-.4V6.850l1.800-.4.55-1.300-1-1.600 1.700-1.700 1.600 1 1.300-.55z" fill="#555"/><circle cx="7.500" cy="8" r="2.600" fill="#aaa"/></svg>
<div class="a blk" style="left:337px;top:542px;width:411px;height:42px"></div>
<div class="a pc" style="left:338px;top:543px;width:258px;height:40px"></div>
<div class="a pr" style="left:597px;top:543px;width:150px;height:40px"></div>
<div class="t pt r" style="right:710px;top:556px">inShouldLoop</div>
<div class="a ib" style="left:526px;top:547px"></div>
<svg style="left:526px;top:547px" width="32" height="32" viewBox="0 0 32 32"><path d="M3.600 21A10.400 10.400 0 0 1 20.300 8.600" fill="none" stroke="#555" stroke-width="2.400"/><path d="M20.800 4.800L24.600 11.800L16.800 11.600z" fill="#555"/><g transform="translate(19.900 19.500) rotate(-19)"><rect x="-10.400" y="-6.200" width="20.800" height="12.400" rx="2" fill="#f0601e"/><text x="0" y="2.700" font-family="Liberation Sans" font-weight="bold" font-size="7.200" fill="#fff" text-anchor="middle" textLength="15.500" lengthAdjust="spacingAndGlyphs">TRUE</text></g></svg>
<!-- block 4 -->
<div class="t bt" id="b4t" style="left:455px;top:598px;letter-spacing:-0.02px">4. Hilscher_Channel_Close</div>
<svg style="left:618px;top:600px" width="8" height="9" viewBox="0 0 8 9"><path d="M2.500 0h3v4.500H8L4 9 0 4.500h2.500z" fill="#4a3a35"/></svg>
<div class="a" style="left:337px;top:612px;width:411px;height:52px;background:#b4b4b4"></div>
<div class="a" style="left:338px;top:613px;width:258px;height:50px;background:#dad9d8"></div>
<div class="a" style="left:597px;top:613px;width:150px;height:16px;background:#c5dbe2"></div>
<div class="a" style="left:597px;top:630px;width:150px;height:16px;background:#c5dbe2"></div>
<div class="a" style="left:597px;top:647px;width:150px;height:16px;background:#c5dbe2"></div>
<div class="t pt r" style="right:710px;top:614px">inBoardName*</div>
<div class="t pt r" style="right:710px;top:631px">inChannelNumber</div>
<div class="t pt r" style="right:710px;top:648px">inCloseCommunication</div>
<div class="a" style="left:526px;top:622px;width:32px;height:32px;background:#e6e5e4;border:1px solid #bcbcbc"></div>
<svg style="left:526px;top:622px" width="32" height="32" viewBox="0 0 32 32"><path d="M1.600 21.800L8.600 13.700Q12 11.900 15.200 11.600L25.100 9.800L27.500 11.900L30.800 14.400L27.500 16L20.900 17.300L18.900 19L20.100 15.700L17.600 15.700Q14.500 18 12.300 21.800Z" fill="#ee8a92"/><path d="M15.200 11.600L25.100 9.800L27.500 11.900L16 13.500Z" fill="#f6bcc0"/></svg>

<!-- PREVIEWS -->
<div class="a" style="left:815px;top:108px;width:1px;height:374px;background:#c6c6c6"></div><div class="a" style="left:815px;top:506px;width:1px;height:480px;background:#c6c6c6"></div>
<div class="a" style="left:816px;top:108px;width:325px;height:374px;background:#fff"></div>
<div class="a" style="left:1144px;top:108px;width:309px;height:374px;background:#fff"></div>
<div class="a" style="left:816px;top:506px;width:325px;height:480px;background:#fff"></div>
<div class="a" style="left:1144px;top:506px;width:309px;height:372px;background:#fff;border:2px solid #f5cf1d;border-bottom-width:2px"></div>
<div class="a" style="left:816px;top:107px;width:325px;height:1px;background:#adadad"></div>
<div class="a" style="left:1144px;top:107px;width:309px;height:1px;background:#adadad"></div>
<div class="a" style="left:816px;top:505px;width:325px;height:1px;background:#adadad"></div>
<svg style="left:816px;top:88px" width="640" height="22" viewBox="816 88 640 22">
 <path d="M818 107.5C822 107.5 823.5 105.5 825.5 103.0L834.5 92.5Q836.5 89.5 840 89.5H913.5Q916 89.5 916 92.0V107.5" fill="#fff" stroke="#9a9a9a"/>
 <path d="M1146 107.5C1150 107.5 1151.5 105.5 1153.5 103.0L1162.5 92.5Q1164.5 89.5 1168 89.5H1242.0Q1244.5 89.5 1244.5 92.0V107.5" fill="#fff" stroke="#9a9a9a"/>
 <use href="#navic" x="1099" y="93.500"/><use href="#navic" x="1411" y="93.500"/>
</svg>
<svg style="left:816px;top:486px" width="640" height="22" viewBox="816 486 640 22">
 <path d="M818 505.5C822 505.5 823.5 503.5 825.5 501.0L834.5 490.5Q836.5 487.5 840 487.5H914.5Q917 487.5 917 490.0V505.5" fill="#fff" stroke="#9a9a9a"/>
 <path d="M1146 505.5C1150 505.5 1151.5 503.5 1153.5 501.0L1162.5 490.5Q1164.5 487.5 1168 487.5H1256.5Q1259 487.5 1259 490.0V505.5" fill="#fff" stroke="#9a9a9a"/>
 <use href="#navic" x="1099" y="491.500"/><use href="#navic" x="1411" y="491.500"/>
</svg>
<div class="a" style="left:1147px;top:506px;width:112px;height:2px;background:#fff"></div>
<div class="t tb" id="tab1" style="left:834px;top:92px">outData1_8Byte</div>
<div class="t tb" id="tab2" style="left:1162px;top:92px">outData2_4Byte</div>
<div class="t tb" id="tab3" style="left:834px;top:490px">outData3_2Byte</div>
<div class="t tb b" id="tab4" style="left:1162px;top:490px">outData4_1Byte</div>
<div class="a lb" style="left:819px;top:110px;width:121px"></div><div class="a vb" style="left:940px;top:110px;width:146px"></div>
<div class="a lb" style="left:1147px;top:110px;width:121px"></div><div class="a vb" style="left:1268px;top:110px;width:74px"></div>
<div class="a lb" style="left:819px;top:508px;width:121px"></div><div class="a vb" style="left:940px;top:508px;width:56px"></div>
<div class="a lb" style="left:1147px;top:508px;width:121px"></div><div class="a vb" style="left:1268px;top:508px;width:56px"></div>
<div class="t lt" id="lb1" style="left:825px;top:113px">outData1_8Byte</div>
<div class="t lt" style="left:1153px;top:113px">outData2_4Byte</div>
<div class="t lt" style="left:825px;top:511px">outData3_2Byte</div>
<div class="t lt" style="left:1153px;top:511px">outData4_1Byte</div>
<div class="t mono mv" style="left:944px;top:113px">72057594037927936</div>
<div class="t mono mv" style="left:1272px;top:113px">16777216</div>
<div class="t mono mv" style="left:944px;top:511px">1024</div>
<div class="t mono mv" style="left:1272px;top:511px">103</div>
<!-- bottom-right hidden panel pieces -->
<div class="a" style="left:1428px;top:884px;width:25px;height:22px;background:#bfcddb"></div>
<svg style="left:1437px;top:891px" width="9" height="9"><path d="M1 1l7 7M8 1l-7 7" stroke="#111" stroke-width="2.200"/></svg>
<div class="a" style="left:1428px;top:906px;width:25px;height:56px;background:#fff"></div>
<div class="a" style="left:1435px;top:906px;width:17px;height:55px;background:#f0f0f0"></div>
<div class="a" style="left:1436px;top:927px;width:15px;height:17px;background:#cdcdcd"></div>
<svg style="left:1439px;top:913px" width="9" height="6" viewBox="0 0 9 6"><path d="M1 5l3.500-3.500L8 5" fill="none" stroke="#555" stroke-width="1.400"/></svg>
<svg style="left:1439px;top:949px" width="9" height="6" viewBox="0 0 9 6"><path d="M1 1l3.500 3.500L8 1" fill="none" stroke="#555" stroke-width="1.400"/></svg>
<div class="a" style="left:1428px;top:962px;width:25px;height:1px;background:#b0b0b0"></div>
<div class="a" style="left:1428px;top:963px;width:25px;height:23px;background:#fff"></div>

<!-- STATUS -->
<div class="a" style="left:1px;top:986px;width:327px;height:24px;background:linear-gradient(#fdfdfd,#f1f1f1)"></div>
<div class="a" style="left:1429px;top:986px;width:24px;height:24px;background:linear-gradient(#fdfdfd,#f1f1f1)"></div>
<div class="a" style="left:1px;top:1008px;width:1452px;height:2px;background:#f0f0f0"></div>
<div class="a" style="left:0;top:1010px;width:1454px;height:1px;background:#8e8e8e"></div><div class="a" style="left:0;top:1011px;width:1454px;height:1px;background:#2f2f2f"></div>
<div class="t st" style="left:4.5px;top:992px;color:#8b0000">Running...</div>
<div class="t st" style="left:75.5px;top:992px;letter-spacing:0.5px">Main(2)</div>
<div class="t st" style="left:1425.4px;top:992px;letter-spacing:0;color:#101030">70 s</div>

<!-- WATCH -->
<div class="a" style="left:328px;top:665px;width:1101px;height:343px;background:#fdfdfd;border:1px solid #b5b5b5"></div>
<div class="a" style="left:332px;top:669px;width:1093.5px;height:335.5px;background:#000"></div>
<div class="a" style="left:334px;top:670px;width:1089px;height:21px;background:linear-gradient(#5b5d60 0,#4a4c4f 45%,#26282a 60%,#1b1d1f 100%)"></div>
<div class="a" style="left:431px;top:678px;width:939px;height:5px;background-image:radial-gradient(circle at 1px 1px,#888c90 0.6px,transparent 0.9px),radial-gradient(circle at 1px 1px,#888c90 0.6px,transparent 0.9px);background-size:4px 4px,4px 4px;background-position:0 0,2px 2px"></div>
<div class="t wt" id="w_title" style="left:337px;top:674px;font-size:12px">Watch (Project)1</div>
<svg style="left:1378px;top:675px" width="44" height="12" viewBox="0 0 44 12"><path d="M1 6.500h8l-4 4z" fill="#fff"/><rect x="18" y="2" width="7" height="8" fill="none" stroke="#fff" stroke-width="1.400"/><path d="M17.300 2.300h8.400" stroke="#fff" stroke-width="2.200"/><path d="M33 1.500l8 8.500M41 1.500l-8 8.500" stroke="#fff" stroke-width="1.500"/></svg>
<div class="a" style="left:334px;top:692px;width:1089px;height:16px;background:#3b3c42"></div>
<div class="a" id="wrows" style="left:334px;top:708px;width:1089px;height:273px;background:repeating-linear-gradient(#4f5055 0,#4f5055 21px,#5c5c61 21px,#5c5c61 42px)"></div>
<div class="a" style="left:334px;top:981px;width:1089px;height:22px;background:#4a4a4f"></div>
<div class="a" style="left:334px;top:876px;width:1089px;height:21px;background:#74b9f0"></div>
<!-- col separators -->
<div class="a cs" style="left:471px"></div><div class="a cs" style="left:671px"></div><div class="a cs" style="left:821px"></div><div class="a cs" style="left:921px"></div><div class="a cs" style="left:1071px"></div><div class="a cs" style="left:1171px"></div><div class="a cs" style="left:1321px"></div><div class="a cs" style="left:1421px"></div>
<div class="a ct" style="left:471px"></div><div class="a ct" style="left:671px"></div><div class="a ct" style="left:821px"></div><div class="a ct" style="left:921px"></div><div class="a ct" style="left:1071px"></div><div class="a ct" style="left:1171px"></div><div class="a ct" style="left:1321px"></div><div class="a ct" style="left:1421px"></div>
<!-- headers -->
<div class="t wt wh" style="left:334px;width:137px">Device name</div>
<div class="t wt wh" style="left:472px;width:199px">Name</div>
<div class="t wt wh" style="left:672px;width:149px">Online value</div>
<div class="t wt wh" style="left:822px;width:99px">Modify</div>
<div class="t wt wh" style="left:922px;width:149px">Comment</div>
<div class="t wt wh" style="left:1072px;width:99px">Data type</div>
<div class="t wt wh" style="left:1172px;width:149px">AT</div>
<div class="t wt wh" style="left:1322px;width:99px">Display format</div>
<!-- device boxes -->
<div class="a wb" style="left:342px;top:710px;width:123px"></div><div class="t wbt" style="left:345px;top:711px">new_Controller_0</div>
<div class="a wb" style="left:342px;top:836px;width:123px"></div><div class="t wbt" style="left:345px;top:837px">new_Controller_0</div>
<div class="a wb" style="left:342px;top:962px;width:123px"></div><div class="t wbt" style="left:345px;top:963px">new_Controller_0</div>
<div class="a wb" style="left:496px;top:710px;width:169px"></div><div class="t wbt" style="left:499px;top:711px">Input_Struct</div>
<div class="a wb" style="left:496px;top:836px;width:169px"></div><div class="t wbt" style="left:499px;top:837px">Output_Struct</div>
<div class="a" style="left:496px;top:962px;width:169px;height:16px;background:#505156;border:1px solid #b9b9bb"></div><div class="t wbt" style="left:498px;top:962px;color:#8d8e93;font-style:italic">Input Name...</div>
<svg style="left:482px;top:713px" width="10" height="10"><path d="M0 1h10L5 9.200z" fill="#fff"/></svg>
<svg style="left:482px;top:839px" width="10" height="10"><path d="M0 1h10L5 9.200z" fill="#fff"/></svg>
<svg style="left:501px;top:818px" width="9" height="11"><path d="M.5 .5v10l8-5z" fill="#fff"/></svg>
<svg style="left:501px;top:944px" width="9" height="11"><path d="M.5 .5v10l8-5z" fill="#fff"/></svg>
<!-- names -->
<div class="t wt" style="left:515px;top:733px">OneB</div><div class="t wt" style="left:515px;top:754px">TwoB</div><div class="t wt" style="left:515px;top:775px">FourB</div><div class="t wt" style="left:515px;top:796px">EightB</div><div class="t wt" style="left:515px;top:817px">Buff[0-16]</div>
<div class="t wt" style="left:515px;top:859px">EightB</div><div class="t wt" style="left:515px;top:880px">FourB</div><div class="t wt" style="left:515px;top:901px">TwoB</div><div class="t wt" style="left:515px;top:922px">OneB</div><div class="t wt" style="left:515px;top:943px">Buff[0-16]</div>
<!-- online values -->
<div class="t wt" style="left:677px;top:733px">29</div><div class="t wt" style="left:677px;top:754px">256</div><div class="t wt" style="left:677px;top:775px">167772160</div><div class="t wt" style="left:677px;top:796px">72057594037927936</div>
<div class="t wt" style="left:677px;top:859px">1</div><div class="t wt" style="left:677px;top:880px">1</div><div class="t wt" style="left:677px;top:901px">4</div><div class="t wt" style="left:677px;top:922px">103</div>
<!-- modify -->
<div class="a mb" style="top:730px"></div><div class="a mb" style="top:751px"></div><div class="a mb" style="top:772px"></div><div class="a mb" style="top:793px"></div><div class="a mb" style="top:856px"></div><div class="a mb" style="top:877px"></div><div class="a mb" style="top:898px"></div><div class="a mb" style="top:919px"></div>
<div class="t mt" style="top:733px">0</div><div class="t mt" style="top:754px">0</div><div class="t mt" style="top:775px">0</div><div class="t mt" style="top:796px">0</div><div class="t mt" style="top:859px">1</div><div class="t mt" style="top:880px">1</div><div class="t mt" style="top:901px">4</div><div class="t mt" style="top:922px">103</div>
<!-- data types -->
<div class="t wt" style="left:1077px;top:711px">Input_Data</div><div class="t wt" style="left:1077px;top:732px">BYTE</div><div class="t wt" style="left:1077px;top:753px">INT</div><div class="t wt" style="left:1077px;top:774px">DINT</div><div class="t wt" style="left:1077px;top:795px">LINT</div>
<div class="t wt" style="left:1077px;top:837px">Output_Data</div><div class="t wt" style="left:1077px;top:858px">LINT</div><div class="t wt" style="left:1077px;top:879px">DINT</div><div class="t wt" style="left:1077px;top:900px">INT</div><div class="t wt" style="left:1077px;top:921px">BYTE</div>
<!-- decimal combos -->
<div class="a dc" style="top:732px"><i></i><b>Decimal</b></div><div class="a dc" style="top:753px"><i></i><b>Decimal</b></div><div class="a dc" style="top:774px"><i></i><b>Decimal</b></div><div class="a dc" style="top:795px"><i></i><b>Decimal</b></div><div class="a dc" style="top:858px"><i></i><b>Decimal</b></div><div class="a dc" style="top:879px"><i></i><b>Decimal</b></div><div class="a dc" style="top:900px"><i></i><b>Decimal</b></div><div class="a dc" style="top:921px"><i></i><b>Decimal</b></div>
</body></html>
